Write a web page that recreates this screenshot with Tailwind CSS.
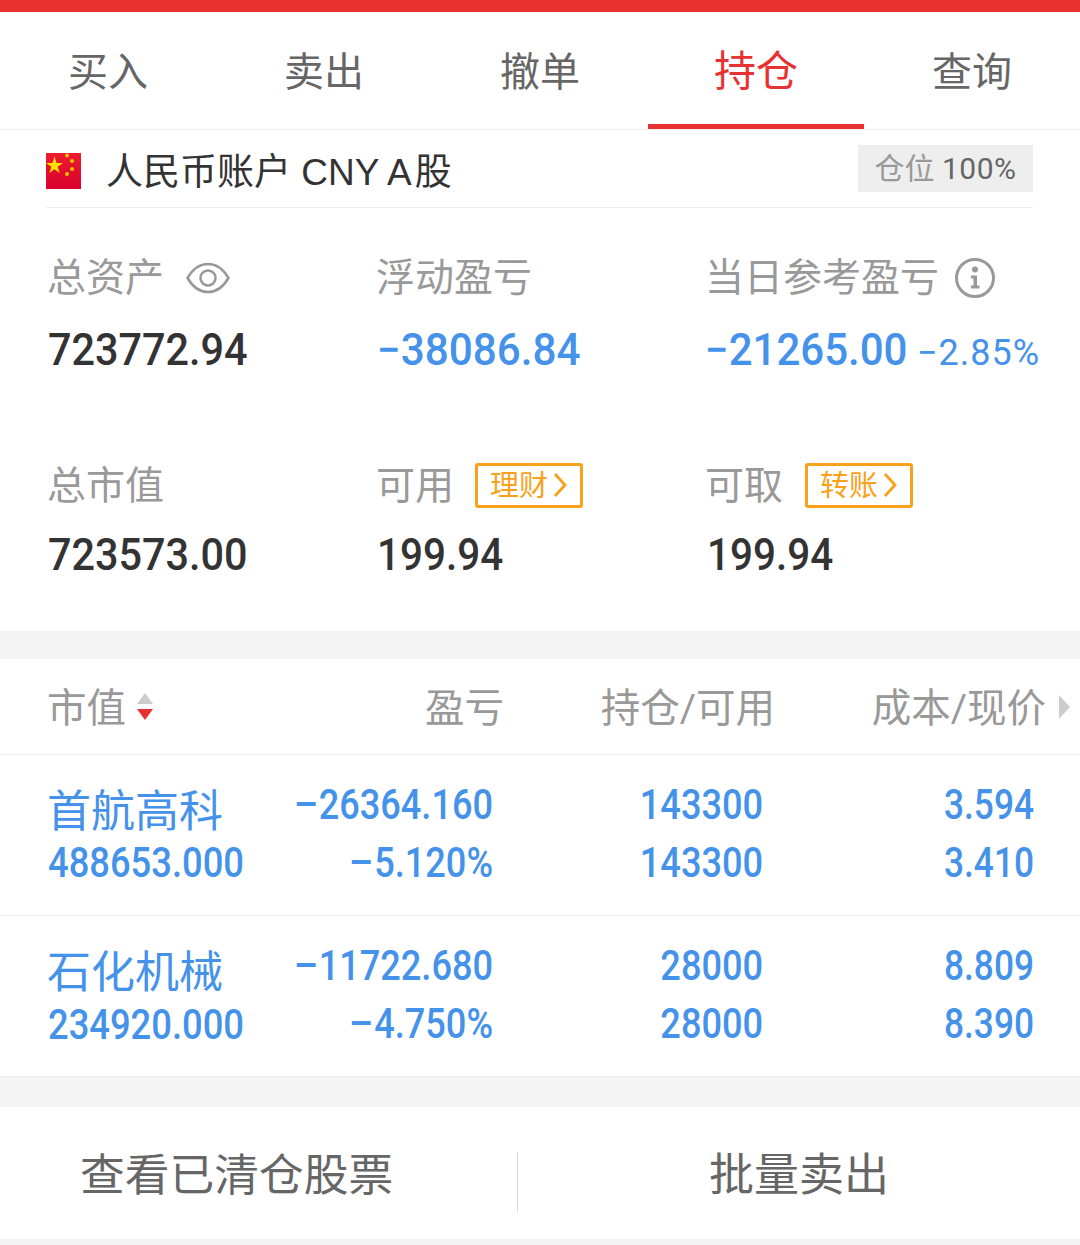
<!DOCTYPE html>
<html lang="zh-CN">
<head>
    <meta charset="UTF-8">
    <meta name="viewport" content="width=device-width, initial-scale=1.0">
    <title>持仓</title>
    <script src="https://cdn.jsdelivr.net/npm/@tailwindcss/browser@4"></script>
</head>
<body class="w-[1080px] h-[1245px] overflow-hidden bg-[#f4f4f4] font-['Roboto','Noto_Sans_CJK_SC',sans-serif]">
    <!-- Top bar -->
    <div class="h-3 bg-[#e83232]"></div>

    <!-- Tabs -->
    <nav class="grid grid-cols-5 h-[118px] bg-white border-b border-[#eeeeee] text-[40px] text-[#666666]">
        <div class="flex items-center justify-center pt-[4px]">买入</div>
        <div class="flex items-center justify-center pt-[4px]">卖出</div>
        <div class="flex items-center justify-center pt-[4px]">撤单</div>
        <div class="flex items-center justify-center pt-[7px] h-[117px] border-b-[5px] border-[#e83232] text-[#e83232] text-[42px]">持仓</div>
        <div class="flex items-center justify-center pt-[4px]">查询</div>
    </nav>

    <!-- Account summary -->
    <section class="bg-white h-[501px]">
        <div class="mx-[46px] w-[987px] h-[78px] border-b border-[#eeeeee] flex items-center justify-between">
            <div class="flex items-center mt-[4px]">
                <svg class="w-[35px] h-[36px]" viewBox="0 0 35 36">
                    <defs>
                        <linearGradient id="flagRed" x1="0" y1="0" x2="0" y2="1">
                            <stop offset="0" stop-color="#ec1c30"/>
                            <stop offset="1" stop-color="#d9002c"/>
                        </linearGradient>
                    </defs>
                    <rect width="35" height="36" fill="url(#flagRed)"/>
                    <polygon points="8,3 10,9.5 16.5,9.5 11.2,13.3 13.2,19.5 8,15.7 2.8,19.5 4.8,13.3 -0.5,9.5 6,9.5" transform="translate(0.5 0.5)" fill="#ffe000"/>
                    <circle cx="21" cy="2.5" r="2" fill="#f2c000"/>
                    <circle cx="26" cy="8" r="2" fill="#f2c000"/>
                    <circle cx="26" cy="16" r="2" fill="#f2c000"/>
                    <circle cx="21" cy="21" r="2" fill="#f2c000"/>
                </svg>
                <span class="ml-[25px] pt-[3px] text-[37px] text-[#333333] leading-none whitespace-nowrap font-['Liberation_Sans','Noto_Sans_CJK_SC',sans-serif]">人民币账户 CNY A<span class="ml-[3px]">股</span></span>
            </div>
            <div class="flex items-center justify-center w-[175px] h-[47px] bg-[#eeeeee] text-[30px] text-[#999999] mb-[1px]">
                <span>仓位&nbsp;</span><span class="text-[#666666] tracking-[0.5px]">100%</span>
            </div>
        </div>

        <div class="grid grid-cols-[329px_329px_1fr] pl-[47px] pt-[48px] gap-y-[89px]">
            <div>
                <div class="flex items-center h-[44px] text-[39px] text-[#999999]">
                    总资产
                    <svg class="w-[44px] h-[32px] ml-[22px] -mt-[1px]" viewBox="0 0 44 32" fill="none" stroke="#999999" stroke-width="2.5">
                        <path d="M1.5 16C7 6.5 14 2 22 2s15 4.5 20.500 14C37 25.500 30 30 22 30S7 25.500 1.500 16Z"/>
                        <circle cx="22" cy="16" r="7.500"/>
                    </svg>
                </div>
                <div class="mt-[25px] ml-[1px] h-[50px] leading-[50px] text-[44px] font-medium text-[#333333] origin-left scale-x-[0.94]">723772.94</div>
            </div>
            <div>
                <div class="flex items-center h-[44px] text-[39px] text-[#999999]">浮动盈亏</div>
                <div class="mt-[25px] ml-[1px] h-[50px] leading-[50px] text-[44px] font-medium text-[#4592ea] origin-left scale-x-[0.96]">−38086.84</div>
            </div>
            <div>
                <div class="flex items-center h-[44px] text-[39px] text-[#999999]">
                    当日参考盈亏
                    <svg class="w-[40px] h-[40px] ml-[16px] -mt-[1px]" viewBox="0 0 40 40" fill="none">
                        <circle cx="20" cy="20" r="18.500" stroke="#999999" stroke-width="3"/>
                        <circle cx="20" cy="11.500" r="3" fill="#999999"/>
                        <path d="M16 17.500H22V27.500H24.500V30.500H16V27.500H18.500V20.500H16Z" fill="#999999"/>
                    </svg>
                </div>
                <div class="mt-[25px] h-[50px] flex items-baseline text-[#4592ea] whitespace-nowrap">
                    <span class="leading-[50px] text-[44px] font-medium w-[212px] origin-left scale-x-[0.955]">−21265.00</span>
                    <span class="text-[36px] leading-[50px] tracking-[1px]">−2.85%</span>
                </div>
            </div>
            <div>
                <div class="flex items-center h-[44px] text-[39px] text-[#999999]">总市值</div>
                <div class="mt-[22px] ml-[1px] h-[50px] leading-[50px] text-[44px] font-medium text-[#333333] origin-left scale-x-[0.94]">723573.00</div>
            </div>
            <div>
                <div class="flex items-center h-[44px] text-[39px] text-[#999999]">
                    可用
                    <span class="flex items-center ml-[21px] -mt-[2px] w-[108px] h-[45px] pl-[12px] border-[3px] border-[#f9a11b] rounded-[3px] text-[29px] text-[#f9a11b]">
                        <span class="pt-[3px]">理财</span>
                        <svg class="w-[14px] h-[26px] ml-[5px]" viewBox="0 0 14 26" fill="none" stroke="#f9a11b" stroke-width="2.800"><path d="M2 2l10 11L2 24"/></svg>
                    </span>
                </div>
                <div class="mt-[22px] ml-[1px] h-[50px] leading-[50px] text-[44px] font-medium text-[#333333] origin-left scale-x-[0.92]">199.94</div>
            </div>
            <div>
                <div class="flex items-center h-[44px] text-[39px] text-[#999999]">
                    可取
                    <span class="flex items-center ml-[22px] -mt-[2px] w-[108px] h-[45px] pl-[12px] border-[3px] border-[#f9a11b] rounded-[3px] text-[29px] text-[#f9a11b]">
                        <span class="pt-[3px]">转账</span>
                        <svg class="w-[14px] h-[26px] ml-[5px]" viewBox="0 0 14 26" fill="none" stroke="#f9a11b" stroke-width="2.800"><path d="M2 2l10 11L2 24"/></svg>
                    </span>
                </div>
                <div class="mt-[22px] ml-[2px] h-[50px] leading-[50px] text-[44px] font-medium text-[#333333] origin-left scale-x-[0.92]">199.94</div>
            </div>
        </div>
    </section>

    <!-- Positions table -->
    <section class="mt-[28px] bg-white">
        <div class="flex items-center h-[96px] pl-[47px] border-b border-[#eeeeee] text-[39.5px] text-[#999999]">
            <div class="w-[201px] flex items-center">
                <span class="pt-[5px]">市值</span>
                <svg class="w-[18px] h-[30px] ml-[10px]" viewBox="0 0 18 30">
                    <path d="M9 1l8 11H1z" fill="#cccccc"/>
                    <path d="M1 17h16l-8 11z" fill="#e83232"/>
                </svg>
            </div>
            <div class="w-[256px] text-right pt-[5px]">盈亏</div>
            <div class="w-[271px] text-right pt-[5px]">持仓/可用</div>
            <div class="w-[271px] text-right pt-[5px]">成本/现价</div>
            <svg class="w-[11px] h-[24px] ml-[13px]" viewBox="0 0 11 24"><path d="M0 0l11 12L0 24z" fill="#cccccc"/></svg>
        </div>

        <div class="flex h-[161px] pl-[48px] border-b border-[#eeeeee] font-medium text-[#4592ea] whitespace-nowrap">
            <div class="w-[200px] pt-[35px]">
                <div class="text-[44px] leading-[44px] font-normal -ml-[1px]">首航高科</div>
                <div class="text-[42px] leading-[58px] origin-left scale-x-[0.865]">488653.000</div>
            </div>
            <div class="w-[245px] pt-[21px] text-right text-[42px] leading-[58px] origin-right scale-x-[0.86]">
                <div><span class="inline-block origin-right scale-x-[1.25]">−</span>26364.160</div>
                <div><span class="inline-block origin-right scale-x-[1.25]">−</span>5.120%</div>
            </div>
            <div class="w-[270px] pt-[21px] text-right text-[42px] leading-[58px]">
                <div class="origin-right scale-x-[0.86]">143300</div>
                <div class="origin-right scale-x-[0.86]">143300</div>
            </div>
            <div class="w-[271px] pt-[21px] text-right text-[42px] leading-[58px]">
                <div class="origin-right scale-x-[0.84]">3.594</div>
                <div class="origin-right scale-x-[0.84]">3.410</div>
            </div>
        </div>

        <div class="flex h-[161px] pl-[48px] border-b border-[#eeeeee] font-medium text-[#4592ea] whitespace-nowrap">
            <div class="w-[200px] pt-[35px]">
                <div class="text-[44px] leading-[44px] font-normal -ml-[1px]">石化机械</div>
                <div class="text-[42px] leading-[59px] origin-left scale-x-[0.865]">234920.000</div>
            </div>
            <div class="w-[245px] pt-[21px] text-right text-[42px] leading-[58px] origin-right scale-x-[0.86]">
                <div><span class="inline-block origin-right scale-x-[1.25]">−</span>11722.680</div>
                <div><span class="inline-block origin-right scale-x-[1.25]">−</span>4.750%</div>
            </div>
            <div class="w-[270px] pt-[21px] text-right text-[42px] leading-[58px]">
                <div class="origin-right scale-x-[0.86]">28000</div>
                <div class="origin-right scale-x-[0.86]">28000</div>
            </div>
            <div class="w-[271px] pt-[21px] text-right text-[42px] leading-[58px]">
                <div class="origin-right scale-x-[0.84]">8.809</div>
                <div class="origin-right scale-x-[0.84]">8.390</div>
            </div>
        </div>
    </section>

    <!-- Footer actions -->
    <footer class="mt-[30px] flex items-center h-[132px] bg-white text-[45px] text-[#666666]">
        <div class="w-[517px] pl-[80px] pt-[5px] text-[44.75px] whitespace-nowrap">查看已清仓股票</div>
        <div class="w-px h-[60px] self-end mb-[27px] bg-[#d8d8d8]"></div>
        <div class="flex-1 text-center pt-[5px]">批量卖出</div>
    </footer>
</body>
</html>
